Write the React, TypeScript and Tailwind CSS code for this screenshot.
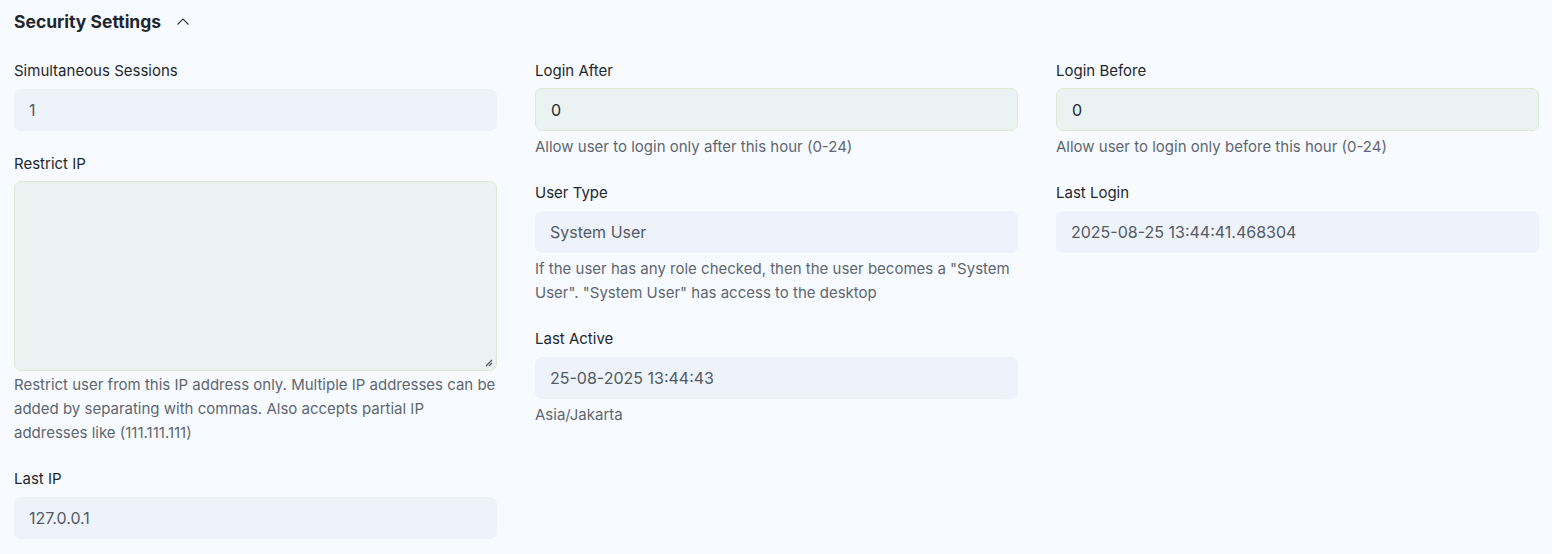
import React from 'react';

type Field = {
  label: string;
  value?: string;
  help?: string;
  editable?: boolean;
  textarea?: boolean;
};

const columns: Field[][] = [
  [
    { label: 'Simultaneous Sessions', value: '1' },
    {
      label: 'Restrict IP',
      textarea: true,
      editable: true,
      help: 'Restrict user from this IP address only. Multiple IP addresses can be added by separating with commas. Also accepts partial IP addresses like (111.111.111)',
    },
    { label: 'Last IP', value: '127.0.0.1' },
  ],
  [
    { label: 'Login After', value: '0', editable: true, help: 'Allow user to login only after this hour (0-24)' },
    {
      label: 'User Type',
      value: 'System User',
      help: 'If the user has any role checked, then the user becomes a "System User". "System User" has access to the desktop',
    },
    { label: 'Last Active', value: '25-08-2025 13:44:43', help: 'Asia/Jakarta' },
  ],
  [
    { label: 'Login Before', value: '0', editable: true, help: 'Allow user to login only before this hour (0-24)' },
    { label: 'Last Login', value: '2025-08-25 13:44:41.468304' },
  ],
];

function FormField({ field }: { field: Field }) {
  return (
    <div className={field.help ? 'mb-[23px]' : 'mb-[22px]'}>
      <div className="pt-px mb-2 text-[15px] leading-5 text-[#1f272e]">{field.label}</div>
      {field.textarea ? (
        <div className="relative h-[190px] -mt-px rounded-[7px] bg-[#ebf2f2] border border-[#dfead2]">
          <svg className="absolute right-[3px] bottom-[3px]" width="8" height="8" viewBox="0 0 8 8">
            <path d="M1 7 L7 1 M4 7 L7 4" stroke="#555" strokeWidth="1.2" />
          </svg>
        </div>
      ) : field.editable ? (
        <div className="h-[43px] -mt-px flex items-center px-[15px] rounded-[7px] bg-[#ebf2f2] border border-[#dfead2] text-[16px] text-[#1f272e]">
          {field.value}
        </div>
      ) : (
        <div className="h-[42px] flex items-center px-[15px] rounded-[7px] bg-[#eef2fa] text-[16px] text-[#525a63]">
          {field.value}
        </div>
      )}
      {field.help && (
        <p className={`${field.textarea ? 'mt-[2px]' : 'mt-[4px]'} text-[15px] leading-6 text-[#5f6670]`}>
          {field.help}
        </p>
      )}
    </div>
  );
}

export default function App() {
  return (
    <div
      className="w-[1552px] h-[554px] bg-[#f7fbff] pl-[14px] pr-[13px] pt-[10px] overflow-hidden"
      style={{ fontFamily: 'Inter, "Noto Sans", sans-serif' }}
    >
      <div className="flex items-center h-6 mb-[26px]">
        <h2 className="text-[17.5px] font-bold text-[#1f272e]">Security Settings</h2>
        <svg className="ml-[15px]" width="14" height="10" viewBox="0 0 14 10" fill="none">
          <path d="M1.5 7.5 L7 2 L12.5 7.5" stroke="#333" strokeWidth="1.1" />
        </svg>
      </div>
      <div className="grid grid-cols-3 gap-x-[38px]">
        {columns.map((col, i) => (
          <div key={i}>
            {col.map((f) => (
              <FormField key={f.label} field={f} />
            ))}
          </div>
        ))}
      </div>
    </div>
  );
}
